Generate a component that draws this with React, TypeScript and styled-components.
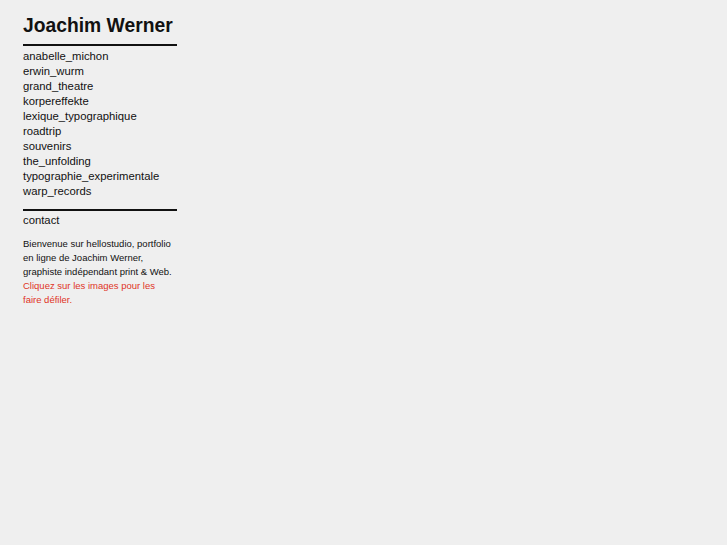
import React from 'react'
import styled, { createGlobalStyle } from 'styled-components'

const GlobalStyle = createGlobalStyle`
  html, body {
    margin: 0;
    padding: 0;
    background: #efefef;
  }
  body {
    font-family: "Liberation Sans", Arial, sans-serif;
    color: #111;
    min-height: 545px;
  }
`

const Sidebar = styled.div`
  width: 154px;
  padding: 14px 0 0 23px;
`

const Title = styled.h1`
  margin: 0;
  font-size: 19.3px;
  line-height: 24px;
  font-weight: bold;
  color: #111;
  padding-bottom: 6px;
  border-bottom: 2px solid #111;
  white-space: nowrap;
`

const Menu = styled.ul`
  list-style: none;
  margin: 0;
  padding: 3px 0 10px;
  border-bottom: 2px solid #111;
`

const MenuItem = styled.li`
  font-size: 11.3px;
  line-height: 15px;
`

const MenuLink = styled.a`
  color: #111;
  text-decoration: none;
`

const Contact = styled.div`
  font-size: 11.3px;
  line-height: 15px;
  padding-top: 2px;
`

const Intro = styled.p`
  margin: 9px 0 0;
  font-size: 9.5px;
  line-height: 14px;
  color: #111;
`

const Hint = styled.span`
  color: #e0341f;
`

const projects = [
  'anabelle_michon',
  'erwin_wurm',
  'grand_theatre',
  'korpereffekte',
  'lexique_typographique',
  'roadtrip',
  'souvenirs',
  'the_unfolding',
  'typographie_experimentale',
  'warp_records',
]

const App: React.FC = (): JSX.Element => {
  return (
    <>
      <GlobalStyle />
      <Sidebar>
        <Title>Joachim Werner</Title>
        <Menu>
          {projects.map((p: string) => (
            <MenuItem key={p}>
              <MenuLink href="#">{p}</MenuLink>
            </MenuItem>
          ))}
        </Menu>
        <Contact>
          <MenuLink href="#">contact</MenuLink>
        </Contact>
        <Intro>
          Bienvenue sur hellostudio, portfolio<br />
          en ligne de Joachim Werner,<br />
          graphiste indépendant print &amp; Web.<br />
          <Hint>Cliquez sur les images pour les<br />faire défiler.</Hint>
        </Intro>
      </Sidebar>
    </>
  )
}

export default App
